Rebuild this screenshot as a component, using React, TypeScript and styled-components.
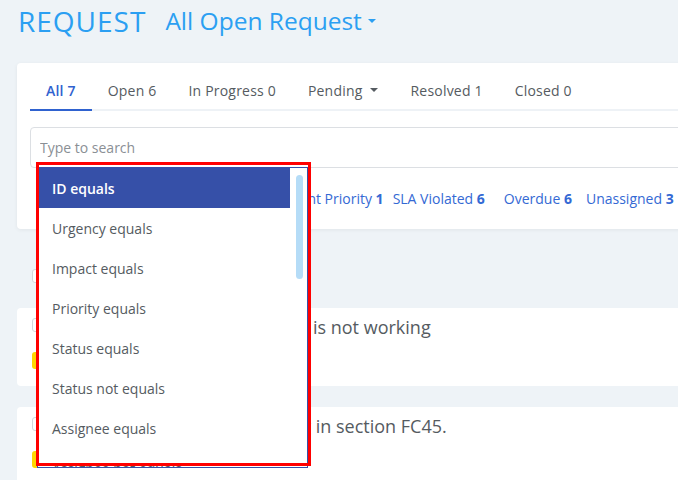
import React from "react";
import styled, { createGlobalStyle } from "styled-components";

const Global = createGlobalStyle`
  html, body { margin: 0; padding: 0; }
  body {
    background: #eef3f7;
    font-family: "Open Sans", Lato, sans-serif;
    overflow: hidden;
    width: 678px;
    height: 480px;
  }
`;

const Page = styled.div`
  padding-left: 17px;
  width: 800px;
`;

const Header = styled.div`
  height: 63px;
  display: flex;
  align-items: flex-start;
  gap: 19px;
  padding-top: 4px;
  box-sizing: border-box;
`;

const Title = styled.h1`
  margin: 0;
  font-size: 28px;
  letter-spacing: 1px;
  font-weight: 400;
  color: #2b9ff2;
  line-height: 34px;
  padding-left: 1px;
`;

const ViewSelect = styled.div`
  display: flex;
  align-items: center;
  gap: 6px;
  font-size: 24.5px;
  color: #2b9ff2;
  line-height: 34px;
`;

const Caret = styled.span<{ $size: number; $color: string }>`
  display: inline-block;
  width: 0;
  height: 0;
  border-left: ${(p) => p.$size}px solid transparent;
  border-right: ${(p) => p.$size}px solid transparent;
  border-top: ${(p) => p.$size}px solid ${(p) => p.$color};
`;

const Card = styled.div`
  background: #fff;
  border-radius: 4px;
  box-shadow: 0 1px 4px rgba(0, 0, 0, 0.06);
  padding: 8px 13px 20px;
  width: 760px;
  box-sizing: border-box;
`;

const Tabs = styled.div`
  display: flex;
  border-bottom: 2px solid #eef2f6;
  height: 40px;
  box-sizing: border-box;
`;

const Tab = styled.div<{ $active?: boolean; $extra?: number }>`
  display: flex;
  align-items: center;
  gap: 7px;
  padding: 0 ${(p) => 16 + (p.$extra || 0)}px 0 16px;
  font-size: 14px;
  letter-spacing: 0.2px;
  color: ${(p) => (p.$active ? "#2f62cf" : "#555b61")};
  font-weight: ${(p) => (p.$active ? 600 : 400)};
  border-bottom: 2px solid ${(p) => (p.$active ? "#2f62cf" : "transparent")};
  margin-bottom: -2px;
`;

const SearchWrap = styled.div`
  position: relative;
  margin-top: 16px;
`;

const SearchInput = styled.input`
  display: block;
  width: 100%;
  height: 41px;
  box-sizing: border-box;
  border: 1px solid #dcdfe3;
  border-radius: 4px;
  padding: 0 9px;
  font-family: inherit;
  font-size: 14px;
  color: #333;
  outline: none;
  &::placeholder {
    color: #8a8f95;
  }
`;

const Dropdown = styled.div`
  position: absolute;
  left: 7px;
  top: 40px;
  width: 271px;
  height: 301px;
  box-sizing: border-box;
  background: #fff;
  border: 1px solid #3650a8;
  overflow: hidden;
  z-index: 5;
`;

const MenuItem = styled.div<{ $active?: boolean }>`
  height: 40px;
  margin-right: 17px;
  display: flex;
  align-items: center;
  padding-left: 14px;
  font-size: 14px;
  color: ${(p) => (p.$active ? "#fff" : "#555b61")};
  font-weight: ${(p) => (p.$active ? 600 : 400)};
  background: ${(p) => (p.$active ? "#3650a8" : "transparent")};
`;

const ScrollThumb = styled.div`
  position: absolute;
  right: 4px;
  top: 7px;
  width: 7px;
  height: 104px;
  border-radius: 4px;
  background: #b5dcf7;
`;

const Highlight = styled.div`
  position: absolute;
  left: 6px;
  top: 35px;
  width: 275px;
  height: 304px;
  box-sizing: border-box;
  border: 3px solid #ff0000;
  z-index: 6;
  pointer-events: none;
`;

const Filters = styled.div`
  display: flex;
  gap: 14px;
  margin-top: 21px;
  padding-left: 246px;
  line-height: 20px;
`;

const Filter = styled.span<{ $gap?: number }>`
  font-size: 14px;
  color: #3469d4;
  white-space: nowrap;
  margin-right: ${(p) => p.$gap || 0}px;
  b {
    font-weight: 700;
  }
`;

const SelectAllRow = styled.div`
  padding: 40px 0 0 15px;
  height: 14px;
  margin-bottom: 25px;
`;

const Checkbox = styled.span`
  display: block;
  width: 14px;
  height: 14px;
  box-sizing: border-box;
  border: 1px solid #d3d7db;
  border-radius: 3px;
  background: #fff;
  flex: none;
`;

const ItemList = styled.div`
  display: flex;
  flex-direction: column;
  gap: 21px;
`;

const ItemCard = styled.div`
  background: #fff;
  border-radius: 4px;
  width: 760px;
  box-sizing: border-box;
  padding: 10px 15px 17px;
`;

const ItemHead = styled.div`
  display: flex;
  align-items: flex-start;
  gap: 22px;
`;

const ItemTitle = styled.div`
  font-size: 18px;
  line-height: 20px;
  color: #555b61;
  margin-top: -1px;
`;

const Tags = styled.div`
  display: flex;
  gap: 8px;
  margin-top: 15px;
`;

const Tag = styled.span<{ $bg: string; $w: number }>`
  display: block;
  height: 17px;
  width: ${(p) => p.$w}px;
  border-radius: 3px;
  background: ${(p) => p.$bg};
`;

const menu = [
  "ID equals",
  "Urgency equals",
  "Impact equals",
  "Priority equals",
  "Status equals",
  "Status not equals",
  "Assignee equals",
  "Assignee not equals",
  "Requester equals",
];

export default function App() {
  return (
    <>
      <Global />
      <Page>
        <Header>
          <Title>REQUEST</Title>
          <ViewSelect>
            All Open Request
            <Caret $size={4} $color="#2b9ff2" />
          </ViewSelect>
        </Header>
        <Card>
          <Tabs>
            <Tab $active>All 7</Tab>
            <Tab>Open 6</Tab>
            <Tab>In Progress 0</Tab>
            <Tab $extra={1}>
              Pending <Caret $size={4} $color="#555b61" />
            </Tab>
            <Tab>Resolved 1</Tab>
            <Tab>Closed 0</Tab>
          </Tabs>
          <SearchWrap>
            <SearchInput placeholder="Type to search" />
            <Dropdown>
              {menu.map((m, i) => (
                <MenuItem key={m} $active={i === 0}>
                  {m}
                </MenuItem>
              ))}
              <ScrollThumb />
            </Dropdown>
            <Highlight />
          </SearchWrap>
          <Filters>
            <Filter $gap={-5}>
              Urgent Priority <b>1</b>
            </Filter>
            <Filter $gap={5}>
              SLA Violated <b>6</b>
            </Filter>
            <Filter>
              Overdue <b>6</b>
            </Filter>
            <Filter>
              Unassigned <b>3</b>
            </Filter>
          </Filters>
        </Card>
        <SelectAllRow>
          <Checkbox />
        </SelectAllRow>
        <ItemList>
          <ItemCard>
            <ItemHead>
              <Checkbox />
              <ItemTitle>Scanner in the training room is not working</ItemTitle>
            </ItemHead>
            <Tags>
              <Tag $bg="#ffd600" $w={48} />
              <Tag $bg="#b3c6d9" $w={40} />
            </Tags>
          </ItemCard>
          <ItemCard>
            <ItemHead>
              <Checkbox />
              <ItemTitle>Air conditioning isn't working in section FC45.</ItemTitle>
            </ItemHead>
            <Tags>
              <Tag $bg="#ffd600" $w={48} />
              <Tag $bg="#b3c6d9" $w={40} />
              <Tag $bg="#e8475a" $w={60} />
              <Tag $bg="#f0843c" $w={87} />
            </Tags>
          </ItemCard>
        </ItemList>
      </Page>
    </>
  );
}
